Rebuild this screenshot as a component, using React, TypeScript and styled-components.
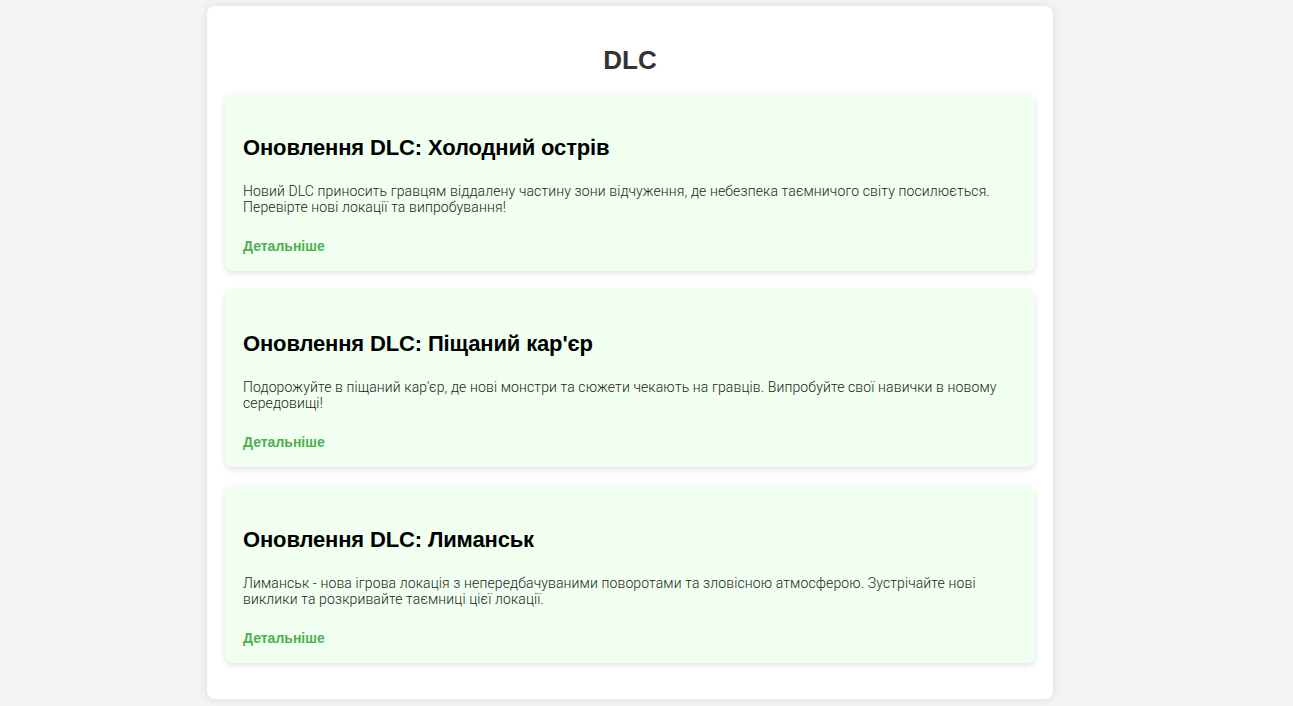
import React from "react";
import styled, { createGlobalStyle } from "styled-components";

const Global = createGlobalStyle`
  html, body { margin: 0; padding: 0; }
  body {
    background: #f4f4f4;
    font-family: "Liberation Sans", Arial, sans-serif;
  }
`;

const Container = styled.main`
  width: 810px;
  margin: 6px 0 7px 207px;
  padding: 20px 18px 17px;
  background: #ffffff;
  border-radius: 8px;
  box-shadow: 0 0 10px rgba(0, 0, 0, 0.1);
`;

const Title = styled.h1`
  margin: 19px 0;
  text-align: center;
  font-size: 26px;
  line-height: 30px;
  font-weight: 700;
  color: #333;
`;

const Card = styled.article`
  background: #f0fff0;
  border-radius: 8px;
  padding: 20px 18px 17px;
  margin-bottom: 19px;
  box-shadow: 0 2px 6px rgba(0, 0, 0, 0.12);
`;

const CardTitle = styled.h2`
  margin: 21px 0 23px;
  font-size: 22px;
  line-height: 25px;
  letter-spacing: -0.15px;
  font-weight: 700;
  color: #000;
`;

const CardText = styled.p`
  margin: 0;
  font-family: Roboto, sans-serif;
  font-weight: 300;
  letter-spacing: 0.12px;
  font-size: 14px;
  line-height: 16px;
  color: #1e1e1e;
`;

const More = styled.a`
  display: block;
  width: fit-content;
  margin-top: 23px;
  font-size: 14px;
  line-height: 16px;
  font-weight: 700;
  color: #4caf50;
  text-decoration: none;
`;

const items = [
  {
    title: "Оновлення DLC: Холодний острів",
    text: "Новий DLC приносить гравцям віддалену частину зони відчуження, де небезпека таємничого світу посилюється. Перевірте нові локації та випробування!",
  },
  {
    title: "Оновлення DLC: Піщаний кар'єр",
    text: "Подорожуйте в піщаний кар'єр, де нові монстри та сюжети чекають на гравців. Випробуйте свої навички в новому середовищі!",
  },
  {
    title: "Оновлення DLC: Лиманськ",
    text: "Лиманськ - нова ігрова локація з непередбачуваними поворотами та зловісною атмосферою. Зустрічайте нові виклики та розкривайте таємниці цієї локації.",
  },
];

export default function App() {
  return (
    <>
      <Global />
      <Container>
        <Title>DLC</Title>
        {items.map((it) => (
          <Card key={it.title}>
            <CardTitle>{it.title}</CardTitle>
            <CardText>{it.text}</CardText>
            <More href="#">Детальніше</More>
          </Card>
        ))}
      </Container>
    </>
  );
}
